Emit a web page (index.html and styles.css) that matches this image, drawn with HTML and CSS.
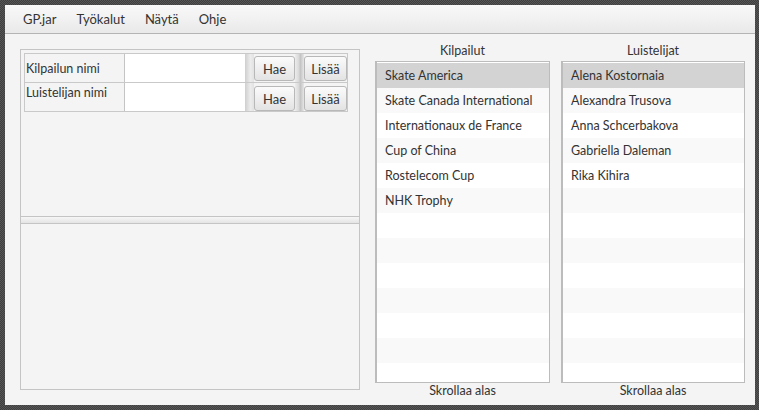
FILE: index.html
```html
<!DOCTYPE html>
<html lang="fi">
<head>
<meta charset="utf-8">
<title>GP</title>
<link rel="stylesheet" href="styles.css">
</head>
<body>
<div class="window">
  <div class="menubar">
    <span class="menu">GP.jar</span>
    <span class="menu">Työkalut</span>
    <span class="menu">Näytä</span>
    <span class="menu">Ohje</span>
  </div>
  <div class="content">
    <div class="split">
      <div class="pane top">
        <div class="form">
          <div class="label">Kilpailun nimi</div>
          <div class="field"></div>
          <div class="sep"></div>
          <div class="bcell"><button class="btn">Hae</button></div>
          <div class="sep2"></div>
          <div class="bcell"><button class="btn">Lisää</button></div>

          <div class="label top-al">Luistelijan nimi</div>
          <div class="field"></div>
          <div class="sep"></div>
          <div class="bcell low"><button class="btn">Hae</button></div>
          <div class="sep2"></div>
          <div class="bcell low"><button class="btn">Lisää</button></div>
        </div>
      </div>
      <div class="divider"></div>
      <div class="pane bottom"></div>
    </div>
    <div class="col c1">
      <div class="hdr">Kilpailut</div>
      <div class="list">
        <div class="row sel">Skate America</div>
        <div class="row">Skate Canada International</div>
        <div class="row">Internationaux de France</div>
        <div class="row">Cup of China</div>
        <div class="row">Rostelecom Cup</div>
        <div class="row">NHK Trophy</div>
        <div class="row"></div><div class="row"></div><div class="row"></div>
        <div class="row"></div><div class="row"></div><div class="row"></div><div class="row"></div>
      </div>
      <div class="ftr">Skrollaa alas</div>
    </div>
    <div class="col c2">
      <div class="hdr">Luistelijat</div>
      <div class="list">
        <div class="row sel">Alena Kostornaia</div>
        <div class="row">Alexandra Trusova</div>
        <div class="row">Anna Schcerbakova</div>
        <div class="row">Gabriella Daleman</div>
        <div class="row">Rika Kihira</div>
        <div class="row"></div>
        <div class="row"></div><div class="row"></div><div class="row"></div>
        <div class="row"></div><div class="row"></div><div class="row"></div><div class="row"></div>
      </div>
      <div class="ftr">Skrollaa alas</div>
    </div>
  </div>
</div>
</body>
</html>
```

FILE: styles.css
```css
* { box-sizing: border-box; }
html, body { margin: 0; padding: 0; }
body {
  width: 759px;
  height: 410px;
  overflow: hidden;
  background-color: #4a4a4a;
  background-image: repeating-conic-gradient(#3f3f3f 0 25%, #565656 0 50%);
  background-size: 2px 2px;
  font-family: Lato, "Noto Sans", sans-serif;
  font-size: 12.5px;
  color: #333333;
}
.window {
  margin: 5px;
  width: 750px;
  height: 400px;
  background: #f4f4f4;
  display: flex;
  flex-direction: column;
}
.menubar {
  height: 29px;
  flex: none;
  border-bottom: 1px solid #b4b4b4;
  background: linear-gradient(#f9f9f9, #e9e9e9);
  display: flex;
  align-items: center;
  padding-left: 18px;
  gap: 20px;
  font-size: 13px;
}
.content {
  flex: 1;
  display: flex;
  padding: 8px 0 0 15px;
}
.split {
  width: 340px;
  height: 341px;
  margin-top: 7px;
  border: 1px solid #c4c4c4;
  display: flex;
  flex-direction: column;
}
.pane.top {
  height: 166px;
  flex: none;
  padding: 3px;
}
.divider {
  height: 8px;
  flex: none;
  border-top: 1px solid #c4c4c4;
  border-bottom: 1px solid #c4c4c4;
  background: linear-gradient(#f6f6f6, #e4e4e4);
}
.pane.bottom { flex: 1; }

.form {
  display: grid;
  grid-template-columns: 100px 120px 9px 41px 9px 43px;
  grid-template-rows: 28px 28px;
  row-gap: 1px;
  width: 324px;
  background: #c9c9c9;
  border: 1px solid #c9c9c9;
}
.label {
  background: #f4f4f4;
  border-right: 1px solid #c4c4c4;
  display: flex;
  align-items: center;
  padding-left: 1px;
  white-space: nowrap;
}
.label.top-al { align-items: flex-start; padding-top: 2px; }
.field { background: #ffffff; }
.sep { background: linear-gradient(to right, #cfcfcf, #ececec 60%, #e2e2e2); }
.sep2 { background: linear-gradient(to right, #ececec, #dadada 40%, #c4c4c4 60%, #e6e6e6); }
.bcell {
  background: #f4f4f4;
  padding-top: 2px;
  display: flex;
  align-items: flex-start;
}
.bcell.low { padding-top: 3px; }
.btn {
  font: inherit;
  font-size: 13px;
  color: #333;
  width: 100%;
  height: 25px;
  border: 1px solid #b8b8b8;
  border-radius: 3px;
  background: linear-gradient(#fbfbfb, #e3e3e3);
  padding: 0;
  text-align: center;
}

.col {
  display: flex;
  flex-direction: column;
}
.c1 { width: 175px; margin-left: 15px; }
.c2 { width: 184px; margin-left: 11px; }
.hdr {
  height: 17px;
  line-height: 17px;
  text-align: center;
  margin-bottom: 2px;
}
.list {
  height: 322px;
  border: 1px solid #bcbcbc;
  border-left-width: 2px;
  padding-top: 1px;
  background: #fff;
  overflow: hidden;
}
.row {
  height: 25px;
  line-height: 26px;
  padding-left: 8px;
  white-space: nowrap;
  background: #ffffff;
}
.row:nth-child(even) { background: #f9f9f9; }
.row.sel { background: #d3d3d3; }
.ftr {
  height: 16px;
  line-height: 16px;
  text-align: center;
}
```
